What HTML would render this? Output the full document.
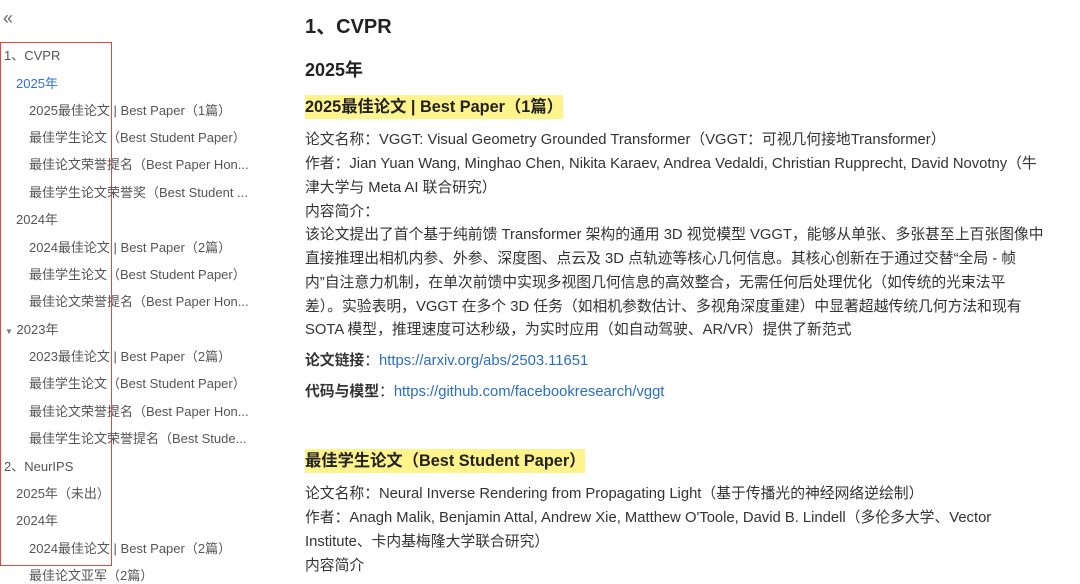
<!DOCTYPE html>
<html><head><meta charset="utf-8"><style>
body{margin:0;width:1080px;height:577px;overflow:hidden;background:#fff;font-family:"Liberation Sans","Noto Sans CJK SC",sans-serif;color:#333;position:relative}
.it{position:absolute;font-size:13px;color:#555;white-space:nowrap;line-height:16px}
.box{position:absolute;left:0;top:42px;width:110px;height:522px;border:1.5px solid #e8453c}
.m{position:absolute;left:305px;top:0;width:760px}
.m div{position:absolute;left:0;white-space:nowrap}
.t{font-size:14.8px;line-height:16px;color:#333;margin-top:2px}
.h{font-weight:bold;font-size:16.3px;background:#fff38c;padding:2px 0;line-height:20px;color:#222}
a{color:#2a6ec9;text-decoration:none}
</style></head><body>
<div style="position:absolute;left:3px;top:8px;font-size:18px;color:#666">«</div>
<div class="box"></div>
<div class="it" style="left:4px;top:48px">1、CVPR</div>
<div class="it" style="left:16px;top:76px;color:#2f6fe0">2025年</div>
<div class="it" style="left:29px;top:103px">2025最佳论文 | Best Paper（1篇）</div>
<div class="it" style="left:29px;top:130px">最佳学生论文（Best Student Paper）</div>
<div class="it" style="left:29px;top:157px">最佳论文荣誉提名（Best Paper Hon...</div>
<div class="it" style="left:29px;top:185px">最佳学生论文荣誉奖（Best Student ...</div>
<div class="it" style="left:16px;top:212px">2024年</div>
<div class="it" style="left:29px;top:240px">2024最佳论文 | Best Paper（2篇）</div>
<div class="it" style="left:29px;top:267px">最佳学生论文（Best Student Paper）</div>
<div class="it" style="left:29px;top:294px">最佳论文荣誉提名（Best Paper Hon...</div>
<div class="it" style="left:5px;top:322px"><span style="font-size:8px;color:#777">▼</span> 2023年</div>
<div class="it" style="left:29px;top:349px">2023最佳论文 | Best Paper（2篇）</div>
<div class="it" style="left:29px;top:376px">最佳学生论文（Best Student Paper）</div>
<div class="it" style="left:29px;top:404px">最佳论文荣誉提名（Best Paper Hon...</div>
<div class="it" style="left:29px;top:431px">最佳学生论文荣誉提名（Best Stude...</div>
<div class="it" style="left:4px;top:459px">2、NeurIPS</div>
<div class="it" style="left:16px;top:486px">2025年（未出）</div>
<div class="it" style="left:16px;top:513px">2024年</div>
<div class="it" style="left:29px;top:541px">2024最佳论文 | Best Paper（2篇）</div>
<div class="it" style="left:29px;top:568px">最佳论文亚军（2篇）</div>

<div class="m">
<div style="top:10px;font-size:20px;font-weight:bold;color:#222">1、CVPR</div>
<div style="top:56px;font-size:18px;font-weight:bold;color:#222">2025年</div>
<div class="h" style="top:95px">2025最佳论文 | Best Paper（1篇）</div>
<div class="t" style="top:130px">论文名称：VGGT: Visual Geometry Grounded Transformer（VGGT：可视几何接地Transformer）</div>
<div class="t" style="top:154px">作者：Jian Yuan Wang, Minghao Chen, Nikita Karaev, Andrea Vedaldi, Christian Rupprecht, David Novotny（牛</div>
<div class="t" style="top:178px">津大学与 Meta AI 联合研究）</div>
<div class="t" style="top:202px">内容简介：</div>
<div class="t" style="top:225px">该论文提出了首个基于纯前馈 Transformer 架构的通用 3D 视觉模型 VGGT，能够从单张、多张甚至上百张图像中</div>
<div class="t" style="top:249px">直接推理出相机内参、外参、深度图、点云及 3D 点轨迹等核心几何信息。其核心创新在于通过交替“全局 - 帧</div>
<div class="t" style="top:273px">内”自注意力机制，在单次前馈中实现多视图几何信息的高效整合，无需任何后处理优化（如传统的光束法平</div>
<div class="t" style="top:297px">差）。实验表明，VGGT 在多个 3D 任务（如相机参数估计、多视角深度重建）中显著超越传统几何方法和现有</div>
<div class="t" style="top:320px">SOTA 模型，推理速度可达秒级，为实时应用（如自动驾驶、AR/VR）提供了新范式</div>
<div class="t" style="top:351px"><b>论文链接</b>：<a>https://arxiv.org/abs/2503.11651</a></div>
<div class="t" style="top:382px"><b>代码与模型</b>：<a>https://github.com/facebookresearch/vggt</a></div>
<div class="h" style="top:449px">最佳学生论文（Best Student Paper）</div>
<div class="t" style="top:484px">论文名称：Neural Inverse Rendering from Propagating Light（基于传播光的神经网络逆绘制）</div>
<div class="t" style="top:508px">作者：Anagh Malik, Benjamin Attal, Andrew Xie, Matthew O'Toole, David B. Lindell（多伦多大学、Vector</div>
<div class="t" style="top:532px">Institute、卡内基梅隆大学联合研究）</div>
<div class="t" style="top:556px">内容简介</div>
</div>
</body></html>
